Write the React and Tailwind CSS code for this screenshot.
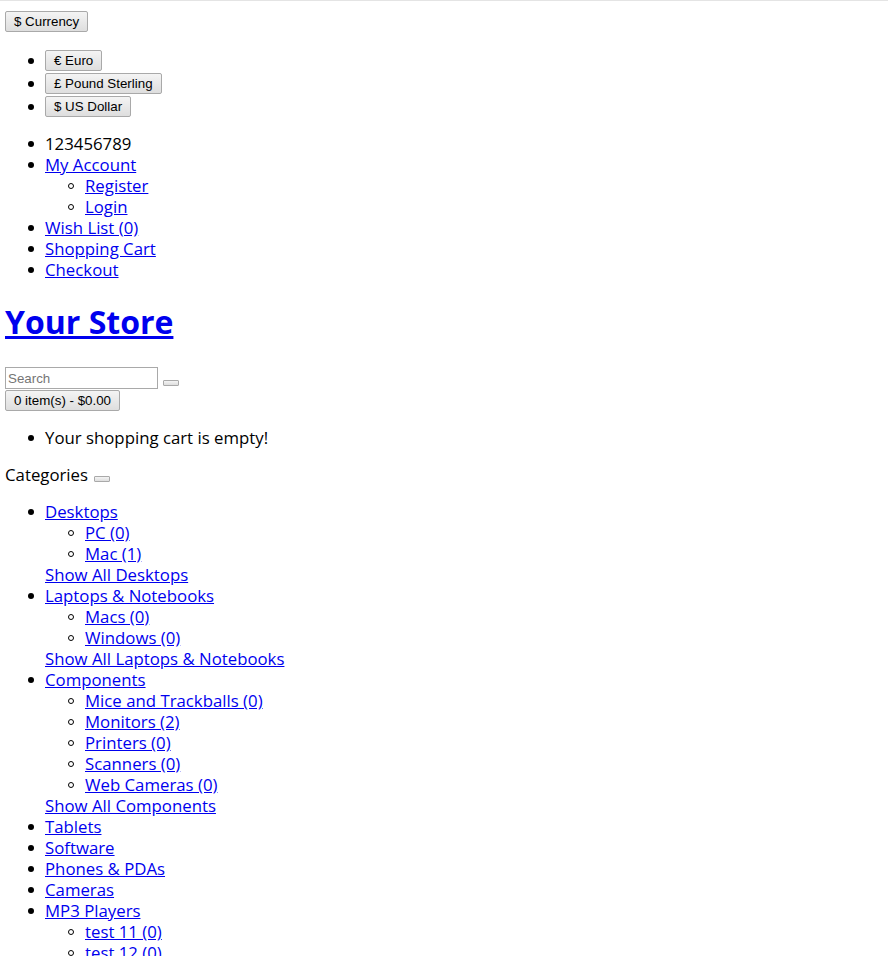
const btn = "inline-flex items-center h-[21px] px-[8px] border border-[#a9a9a9] rounded-[2px] bg-gradient-to-b from-[#f4f4f4] to-[#dedede] text-[13.33px] text-black font-['Liberation_Sans',Arial,sans-serif] leading-none";
const tinyBtn = "block w-[16px] h-[6px] border border-[#a9a9a9] rounded-[1px] bg-gradient-to-b from-[#f4f4f4] to-[#dedede]";
const link = "text-[#0000ee] underline";

function Li({ children }) {
  return <li className="flex h-[21px] items-center">
    <span className="w-[40px] flex justify-end pr-[11px]"><span className="w-[6px] h-[6px] rounded-full bg-black" /></span>
    <span>{children}</span>
  </li>;
}

function SubLi({ children }) {
  return <li className="flex h-[21px] items-center">
    <span className="w-[80px] flex justify-end pr-[11px]"><span className="w-[6px] h-[6px] rounded-full border border-black" /></span>
    <a className={link}>{children}</a>
  </li>;
}

function Plain({ children }) {
  return <div className="flex h-[21px] items-center pl-[40px]"><a className={link}>{children}</a></div>;
}

const cats = [
  { name: "Desktops", subs: ["PC (0)", "Mac (1)"], all: "Show All Desktops" },
  { name: "Laptops & Notebooks", subs: ["Macs (0)", "Windows (0)"], all: "Show All Laptops & Notebooks" },
  { name: "Components", subs: ["Mice and Trackballs (0)", "Monitors (2)", "Printers (0)", "Scanners (0)", "Web Cameras (0)"], all: "Show All Components" },
  { name: "Tablets" },
  { name: "Software" },
  { name: "Phones & PDAs" },
  { name: "Cameras" },
  { name: "MP3 Players", subs: ["test 11 (0)", "test 12 (0)", "test 15 (0)", "test 16 (0)"] },
];

export default function App() {
  return (
    <div className="h-[956px] bg-white border-t border-[#e4e4e4] px-[5px] text-[16.8px] leading-[21px] text-black font-['Open_Sans','Noto_Sans',sans-serif] overflow-hidden">
      <div className="pt-[10px] flex">
        <button className={btn}>$ Currency</button>
      </div>
      <ul className="mt-[17px]">
        {["€ Euro", "£ Pound Sterling", "$ US Dollar"].map(c => (
          <li key={c} className="flex h-[23px] items-center">
            <span className="w-[40px] flex justify-end pr-[11px]"><span className="w-[6px] h-[6px] rounded-full bg-black" /></span>
            <button className={btn}>{c}</button>
          </li>
        ))}
      </ul>
      <ul className="mt-[15px]">
        <Li>123456789</Li>
        <li>
          <div className="flex h-[21px] items-center">
            <span className="w-[40px] flex justify-end pr-[11px]"><span className="w-[6px] h-[6px] rounded-full bg-black" /></span>
            <a className={link}>My Account</a>
          </div>
          <ul>
            <SubLi>Register</SubLi>
            <SubLi>Login</SubLi>
          </ul>
        </li>
        <Li><a className={link}>Wish List (0)</a></Li>
        <Li><a className={link}>Shopping Cart</a></Li>
        <Li><a className={link}>Checkout</a></Li>
      </ul>
      <h1 className="mt-[20px] h-[42px] flex items-center text-[32px] font-bold">
        <a className={link}>Your Store</a>
      </h1>
      <div className="mt-[25px] flex items-end h-[22px]">
        <input placeholder="Search" className="w-[153px] h-[22px] border border-[#a9a9a9] px-[2px] text-[13.33px] font-['Liberation_Sans',Arial,sans-serif] placeholder:text-[#757575]" />
        <button className={"ml-[5px] mb-[3px] " + tinyBtn} />
      </div>
      <div className="mt-[1px] flex">
        <button className={btn}>0 item(s) - $0.00</button>
      </div>
      <ul className="mt-[16px]">
        <Li>Your shopping cart is empty!</Li>
      </ul>
      <div className="mt-[16px] flex h-[21px] items-center">
        Categories
        <button className={"ml-[6px] mt-[8px] " + tinyBtn} />
      </div>
      <ul className="mt-[16px]">
        {cats.map(c => (
          <li key={c.name}>
            <div className="flex h-[21px] items-center">
              <span className="w-[40px] flex justify-end pr-[11px]"><span className="w-[6px] h-[6px] rounded-full bg-black" /></span>
              <a className={link}>{c.name}</a>
            </div>
            {c.subs && <ul>{c.subs.map(s => <SubLi key={s}>{s}</SubLi>)}</ul>}
            {c.all && <Plain>{c.all}</Plain>}
          </li>
        ))}
      </ul>
    </div>
  );
}
